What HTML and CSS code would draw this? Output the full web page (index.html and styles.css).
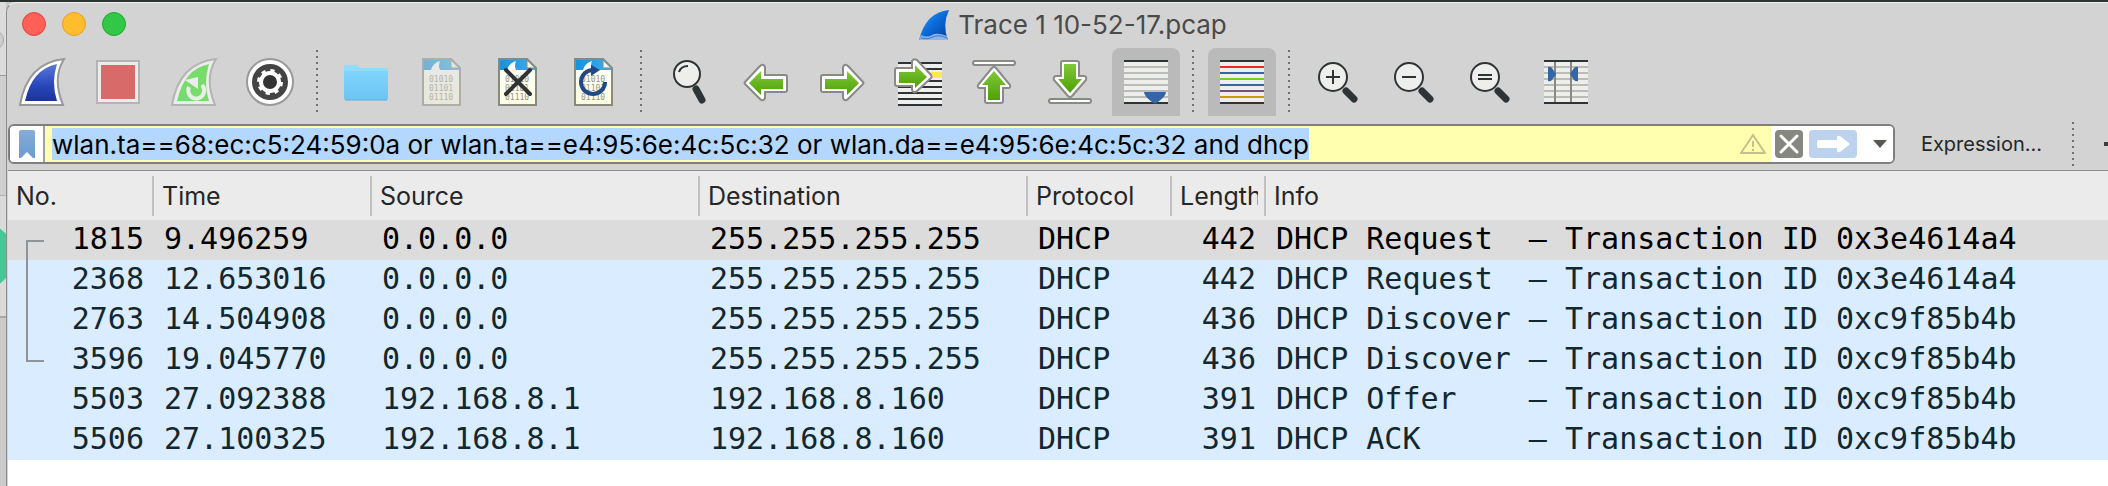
FILE: index.html
```html
<!DOCTYPE html>
<html lang="en">
<head>
<meta charset="utf-8">
<title>Trace 1 10-52-17.pcap</title>
<link rel="stylesheet" href="styles.css">
</head>
<body>
<svg class="defs" width="0" height="0" aria-hidden="true">
<defs>
<linearGradient id="blue" x1="0" y1="0" x2="0" y2="1"><stop offset="0" stop-color="#5a78dc"/><stop offset=".6" stop-color="#2846b8"/><stop offset="1" stop-color="#1c3496"/></linearGradient>
<linearGradient id="logo" x1="0" y1="0" x2="1" y2="1"><stop offset="0" stop-color="#2f9cff"/><stop offset=".5" stop-color="#0a6ad8"/><stop offset="1" stop-color="#063a90"/></linearGradient>
<linearGradient id="green" x1="0" y1="0" x2="0" y2="1"><stop offset="0" stop-color="#80c838"/><stop offset="1" stop-color="#4ea008"/></linearGradient>
<linearGradient id="folder" x1="0" y1="0" x2="0" y2="1"><stop offset="0" stop-color="#7fd4fb"/><stop offset="1" stop-color="#6cc5f3"/></linearGradient>
<linearGradient id="paper" x1="0" y1="0" x2="0" y2="1"><stop offset="0" stop-color="#ffffff"/><stop offset="1" stop-color="#fdfde0"/></linearGradient>
<linearGradient id="sky" x1="0" y1="0" x2="1" y2="0"><stop offset="0" stop-color="#1a90d8"/><stop offset="1" stop-color="#3cb0ea"/></linearGradient>
<linearGradient id="mark" x1="0" y1="0" x2="0" y2="1"><stop offset="0" stop-color="#86acd8"/><stop offset="1" stop-color="#6a9bd0"/></linearGradient>
<path id="arrow" d="M2 24 L17 8 Q20 5 22 9 V17 H42 Q44 17 44 19 V32 Q44 34 42 34 H22 V40 Q20 44 17 41 L2 26 Q1 25 2 24Z"/>
<g id="page">
<path d="M5 1 H33 L42 10 V47 H5Z" fill="url(#paper)"/>
<path d="M5 1 H33 L42 10 V12 H5Z" fill="url(#sky)"/>
<path d="M13 12 Q15 5 22 3 Q20 8 22 12Z" fill="#fff"/>
<path d="M33 2 V10 H42Z" fill="#f4f4ec" stroke="#888a80" stroke-width="1"/>
<g fill="#94948c" font-family="DejaVu Sans Mono, monospace" font-size="8"><text x="11" y="24">01010</text><text x="11" y="33">01101</text><text x="11" y="42">01110</text></g>
<path d="M5 1 H33 L42 10 V47 H5Z" fill="none" stroke="#888a80" stroke-width="2"/>
</g>
<g id="lens"><path d="M30 31 L38 39" stroke="#2e3436" stroke-width="7" stroke-linecap="round"/><circle cx="17" cy="17" r="14" fill="#eeeeec" stroke="#2e3436" stroke-width="2"/></g>
</defs>
</svg>
<div class="desktop">
<div class="behind" aria-hidden="true"><i class="knob"></i><i class="badge"></i></div>
<main class="window">
<header class="titlebar">
<div class="lights"><button class="light red" aria-label="Close"></button><button class="light amber" aria-label="Minimize"></button><button class="light lime" aria-label="Zoom"></button></div>
<h1 class="title"><svg width="32" height="32" viewBox="0 0 32 32" aria-hidden="true"><path d="M1 31 Q8 3 31 1 Q24 16 30 31Z" fill="url(#logo)"/><path d="M1 31 L3 26 Q9 29 14 26 T29 27 L30 31Z" fill="#8cb4e8"/><path d="M3 29 Q10 31 15 28 T29 29" fill="none" stroke="#3c78cc"/></svg>Trace 1 10-52-17.pcap</h1>
</header>
<nav class="toolbar" aria-label="Main toolbar">
<button class="tool" aria-label="Start capture"><svg viewBox="0 0 48 48"><path d="M2 47 Q9 5 46 1 Q34 20 45 47Z" fill="#fff" stroke="#999" stroke-width="2"/><path d="M7 43 Q14 11 39 6 Q33 24 39 43Z" fill="url(#blue)"/></svg></button>
<button class="tool" aria-label="Stop capture"><svg viewBox="0 0 48 48"><path d="M3 3 H45 V45 H3Z" fill="#ececec" stroke="#b4b4b4" stroke-width="2"/><path d="M7 7 H41 V41 H7Z" fill="#d86a6a"/></svg></button>
<button class="tool" aria-label="Restart capture"><svg viewBox="0 0 48 48"><path d="M2 47 Q9 5 46 1 Q34 20 45 47Z" fill="#ececec" stroke="#b4b4b4" stroke-width="2"/><path d="M7 43 Q14 11 39 6 Q33 24 39 43Z" fill="#78dc6c"/><path d="M19 29 A8 8 0 1 0 32 27" fill="none" stroke="#ececec" stroke-width="4"/><path d="M15 22 L28 19 V31Z" fill="#ececec"/></svg></button>
<button class="tool" aria-label="Capture options"><svg viewBox="0 0 48 48"><circle cx="24" cy="24" r="23" fill="#fff" stroke="#999" stroke-width="2"/><circle cx="24" cy="24" r="18" fill="#444"/><circle cx="24" cy="24" r="9" fill="#333" stroke="#fff" stroke-width="4"/><circle cx="24" cy="24" r="11" fill="none" stroke="#fff" stroke-width="4" stroke-dasharray="4 4.64"/></svg></button>
<i class="dots"></i>
<button class="tool" aria-label="Open"><svg viewBox="0 0 48 48"><path d="M2 40 V9 Q2 7 4 7 H15 L19 10 H44 Q46 10 46 12 V40Z" fill="#90dcff"/><path d="M2 13 H46 V40 Q46 42 44 42 H4 Q2 42 2 40Z" fill="url(#folder)"/><path d="M3 42 H45" stroke="#5aaede" stroke-width="1"/></svg></button>
<button class="tool" aria-label="Save" disabled><svg class="faded" viewBox="0 0 48 48"><use href="#page"/></svg></button>
<button class="tool" aria-label="Close file"><svg viewBox="0 0 48 48"><use href="#page"/><path d="M12 12 L36 36 M36 12 L12 36" stroke="#2e3436" stroke-width="4" stroke-linecap="round"/></svg></button>
<button class="tool" aria-label="Reload"><svg viewBox="0 0 48 48"><use href="#page"/><path d="M23 12 A12 12 0 1 0 35 24" fill="none" stroke="#204a87" stroke-width="4"/><path d="M21 7 L30 12 L21 18Z" fill="#204a87"/></svg></button>
<i class="dots"></i>
<button class="tool" aria-label="Find"><svg viewBox="0 0 48 48"><path d="M30 31 L36 42" stroke="#2e3436" stroke-width="7" stroke-linecap="round"/><circle cx="21" cy="16" r="13" fill="#eeeeec" stroke="#2e3436" stroke-width="2"/><path d="M13 14 Q15 8 22 8" fill="none" stroke="#2e3436" stroke-width="2"/></svg></button>
<button class="tool" aria-label="Previous packet"><svg viewBox="0 0 48 48"><g transform="translate(1 0)"><use href="#arrow" fill="#fff" stroke="#888a85" stroke-width="2"/><path d="M6 25 L18 13 V21 H40 V31 H18 V37Z" fill="url(#green)"/></g></svg></button>
<button class="tool" aria-label="Next packet"><svg viewBox="0 0 48 48"><g transform="matrix(-1 0 0 1 47 0)"><use href="#arrow" fill="#fff" stroke="#888a85" stroke-width="2"/><path d="M6 25 L18 13 V21 H40 V31 H18 V37Z" fill="url(#green)"/></g></svg></button>
<button class="tool" aria-label="Go to packet"><svg viewBox="0 0 48 48"><path d="M4 4 H48 V48 H4Z" fill="#eeeeec"/><path d="M30 14 H48 V20 H30Z" fill="#fce94f"/><path d="M4 5 H48 M4 11 H48 M4 23 H48 M4 29 H48 M4 35 H48 M4 41 H48 M4 47 H48" stroke="#2e3436" stroke-width="2"/><g transform="matrix(-1 0 0 1 45 -6)"><path d="M8 23 L22 8 Q25 6 27 9 V16 H42 Q44 16 44 18 V32 Q44 34 42 34 H27 V38 Q25 42 22 39 L8 26 Q7 25 8 23Z" fill="#fff" stroke="#888a85" stroke-width="2"/><path d="M12 25 L24 13 V20 H40 V31 H24 V36Z" fill="url(#green)"/></g></svg></button>
<button class="tool" aria-label="First packet"><svg viewBox="0 0 48 48"><rect x="3" y="3" width="42" height="4" rx="2" fill="#fff" stroke="#888a85" stroke-width="2"/><path d="M22 10 Q24 8 26 10 L40 27 Q41 30 38 30 H33 V43 Q33 45 31 45 H17 Q15 45 15 43 V30 H10 Q7 30 8 27Z" fill="#fff" stroke="#888a85" stroke-width="2"/><path d="M24 13 L36 27 H30 V42 H18 V27 H12Z" fill="url(#green)"/></svg></button>
<button class="tool" aria-label="Last packet"><svg viewBox="0 0 48 48"><rect x="3" y="41" width="42" height="4" rx="2" fill="#fff" stroke="#888a85" stroke-width="2"/><path d="M22 38 Q24 40 26 38 L40 22 Q41 18 38 18 H33 V5 Q33 3 31 3 H17 Q15 3 15 5 V18 H10 Q7 18 8 22Z" fill="#fff" stroke="#888a85" stroke-width="2"/><path d="M24 35 L36 21 H30 V6 H18 V21 H12Z" fill="url(#green)"/></svg></button>
<button class="tool pressed" aria-pressed="true" aria-label="Auto scroll"><svg viewBox="0 0 48 48"><path d="M2 2 H46 V46 H2Z" fill="#eeeeec"/><path d="M2 9 H46 M2 15 H46 M2 21 H46 M2 27 H46 M2 33 H46 M2 39 H46" stroke="#babdb6" stroke-width="2"/><path d="M2 3 H46 M2 45 H46" stroke="#2e3436" stroke-width="2"/><path d="M22 34 H44 Q44 38 36 44 Q33 47 30 44 Q22 38 22 34Z" fill="#3465a4"/></svg></button>
<i class="dots"></i>
<button class="tool pressed" aria-pressed="true" aria-label="Colorize"><svg viewBox="0 0 48 48"><path d="M2 2 H46 V46 H2Z" fill="#eeeeec"/><g stroke-width="2"><path d="M2 3 H46 M2 45 H46" stroke="#2e3436"/><path d="M2 9 H46" stroke="#ef2929"/><path d="M2 15 H46 M2 27 H46" stroke="#3465a4"/><path d="M2 21 H46" stroke="#73d216"/><path d="M2 33 H46" stroke="#75507b"/><path d="M2 39 H46" stroke="#c4a000"/></g></svg></button>
<i class="dots"></i>
<button class="tool" aria-label="Zoom in"><svg viewBox="0 0 48 48"><use href="#lens" x="2" y="2"/><path d="M12 19 H26 M19 12 V26" stroke="#2e3436" stroke-width="2"/></svg></button>
<button class="tool" aria-label="Zoom out"><svg viewBox="0 0 48 48"><use href="#lens" x="2" y="2"/><path d="M12 19 H26" stroke="#2e3436" stroke-width="2"/></svg></button>
<button class="tool" aria-label="Normal size"><svg viewBox="0 0 48 48"><use href="#lens" x="2" y="2"/><path d="M12 17 H26 M12 21 H26" stroke="#2e3436" stroke-width="2"/></svg></button>
<button class="tool" aria-label="Resize columns"><svg viewBox="0 0 48 48"><path d="M2 2 H46 V46 H2Z" fill="#eeeeec"/><path d="M2 9 H46 M2 15 H46 M2 21 H46 M2 27 H46 M2 33 H46 M2 39 H46" stroke="#babdb6" stroke-width="2"/><path d="M13 2 V46 M29 2 V46" stroke="#888a85" stroke-width="2"/><path d="M2 3 H46 M2 45 H46" stroke="#2e3436" stroke-width="2"/><path d="M6 9 Q8 8 10 10 L14 16 L10 22 Q8 24 6 23Z M36 9 Q34 8 32 10 L28 16 L32 22 Q34 24 36 23Z" fill="#3465a4"/></svg></button>
</nav>
<form class="filterbar">
<div class="filter">
<button type="button" class="bookmark" aria-label="Bookmarks"><svg width="16" height="28" viewBox="0 0 16 28"><path d="M0 2 Q0 0 2 0 H14 Q16 0 16 2 V28 H14 L8 22 L2 28 H0Z" fill="url(#mark)"/></svg></button>
<label class="entry" aria-label="Display filter"><input class="query" type="text" value="wlan.ta==68:ec:c5:24:59:0a or wlan.ta==e4:95:6e:4c:5c:32 or wlan.da==e4:95:6e:4c:5c:32 and dhcp"></label>
<svg class="warn" width="26" height="22" viewBox="0 0 26 22" aria-hidden="true"><path d="M13 2 L25 20 H1Z M13 8 V14 M13 16 V18" fill="none" stroke="#c4c28a" stroke-width="2"/></svg>
<div class="actions">
<button type="button" class="clear" aria-label="Clear"><svg width="28" height="28" viewBox="0 0 28 28"><path d="M6 6 L22 22 M22 6 L6 22" stroke="#fff" stroke-width="3" stroke-linecap="round"/></svg></button>
<button type="button" class="apply" aria-label="Apply"><svg width="48" height="28" viewBox="0 0 48 28"><path d="M10 10 H28 V7 Q29 5 31 6 L40 13 Q41 14 40 15 L31 22 Q29 23 28 21 V18 H10 Q8 18 8 16 V12 Q8 10 10 10Z" fill="#fff"/></svg></button>
<button type="button" class="recent" aria-label="Recent filters"><svg width="14" height="8" viewBox="0 0 14 8"><path d="M0 0 H14 L7 8Z" fill="#555753"/></svg></button>
</div>
</div>
<button type="button" class="expression">Expression…</button>
<i class="dots short"></i>
<button type="button" class="plus" aria-label="Add filter button"><svg width="22" height="22" viewBox="0 0 22 22"><path d="M0 11 H22 M11 0 V22" stroke="#3c3c3c" stroke-width="4"/></svg></button>
</form>
<section class="packets">
<table class="list">
<colgroup><col class="c-no"><col class="c-time"><col class="c-addr"><col class="c-addr"><col class="c-proto"><col class="c-len"><col></colgroup>
<thead><tr><th><span>No.</span></th><th><span>Time</span></th><th><span>Source</span></th><th><span>Destination</span></th><th><span>Protocol</span></th><th><span>Length</span></th><th><span>Info</span></th></tr></thead>
<tbody>
<tr class="current"><td>1815</td><td>9.496259</td><td>0.0.0.0</td><td>255.255.255.255</td><td>DHCP</td><td>442</td><td>DHCP Request  – Transaction ID 0x3e4614a4</td></tr>
<tr><td>2368</td><td>12.653016</td><td>0.0.0.0</td><td>255.255.255.255</td><td>DHCP</td><td>442</td><td>DHCP Request  – Transaction ID 0x3e4614a4</td></tr>
<tr><td>2763</td><td>14.504908</td><td>0.0.0.0</td><td>255.255.255.255</td><td>DHCP</td><td>436</td><td>DHCP Discover – Transaction ID 0xc9f85b4b</td></tr>
<tr><td>3596</td><td>19.045770</td><td>0.0.0.0</td><td>255.255.255.255</td><td>DHCP</td><td>436</td><td>DHCP Discover – Transaction ID 0xc9f85b4b</td></tr>
<tr><td>5503</td><td>27.092388</td><td>192.168.8.1</td><td>192.168.8.160</td><td>DHCP</td><td>391</td><td>DHCP Offer    – Transaction ID 0xc9f85b4b</td></tr>
<tr><td>5506</td><td>27.100325</td><td>192.168.8.1</td><td>192.168.8.160</td><td>DHCP</td><td>391</td><td>DHCP ACK      – Transaction ID 0xc9f85b4b</td></tr>
</tbody>
</table>
<i class="related"></i>
</section>
</main>
</div>
</body>
</html>
```
FILE: styles.css
```css
* { box-sizing: border-box; }
body { margin: 0; background: #c8c8c8; font-family: Inter, "Liberation Sans", sans-serif; color: #262626; overflow: hidden; }
button { border: 0; padding: 0; background: none; font: inherit; color: inherit; display: flex; align-items: center; justify-content: center; flex: none; }
.defs { position: absolute; }
.desktop { display: flex; min-height: 100vh; border-top: 2px solid #2c3432; }
.behind { position: relative; width: 6px; flex: none; overflow: hidden; background: linear-gradient(#dcdcdc 0 73px, #9a9a9a 73px 74px, #cfcfcf 74px 193px, #b0b0b0 193px 194px, #dadada 194px 314px, #a8a8a8 314px 316px, #cbcbcb 316px); }
.knob { position: absolute; right: 2px; top: 28px; width: 20px; height: 20px; border: 1px solid #a8a8a8; border-radius: 50%; background: #cecece; }
.badge { position: absolute; left: -54px; top: 220px; width: 68px; height: 68px; border-radius: 50%; background: #45c895; }
.window { flex: 1; min-width: 0; display: flex; flex-direction: column; background: #d3d3d3; border-left: 1px solid #8c8c8c; border-top: 1px solid #f0f0f0; border-top-left-radius: 10px; overflow: hidden; }
.titlebar { position: relative; display: flex; align-items: center; justify-content: center; height: 45px; padding: 0 0 2px 30px; }
.lights { position: absolute; left: 15px; top: 9px; display: flex; gap: 16px; }
.light { width: 24px; height: 24px; border-radius: 50%; border: 1px solid; }
.red { background: #ff6057; border-color: #e0443e; }
.amber { background: #ffbd2e; border-color: #dea123; }
.lime { background: #33c748; border-color: #1aab29; }
.title { margin: 0; display: flex; align-items: center; gap: 8px; font-size: 26px; font-weight: 400; color: #4a4a4a; white-space: nowrap; }
.toolbar { display: flex; gap: 8px; padding-left: 1px; height: 68px; }
.tool { width: 68px; height: 68px; }
.tool svg { width: 48px; height: 48px; }
.pressed { background: #bababa; border-radius: 8px 8px 0 0; }
.faded { opacity: .5; }
.dots { flex: none; width: 12px; height: 64px; margin-top: 2px; background: repeating-linear-gradient(#707070 0 2px, transparent 2px 6px) 4px 0 / 2px 100% no-repeat; }
.filterbar { display: flex; align-items: center; padding: 6px 0 4px 1px; margin-right: -18px; }
.filter { flex: 1; min-width: 0; display: flex; height: 40px; border: 2px solid #7f7f7f; border-radius: 6px; overflow: hidden; background: #ffffaf; }
.bookmark { width: 35px; background: #fff; border-right: 2px solid #a0a0a0; }
.entry { flex: 1; min-width: 0; display: flex; align-items: center; padding-left: 7px; }
.query { field-sizing: content; border: 0; padding: 0; height: 32px; background: #b3d7ff; font: 26px Inter, "Liberation Sans", sans-serif; color: #000; outline: 0; }
.warn { flex: none; align-self: center; margin-right: 5px; }
.actions { display: flex; align-items: center; gap: 6px; width: 122px; padding-left: 4px; background: #fff; }
.clear { width: 28px; height: 28px; border-radius: 4px; background: #858780; }
.apply { width: 48px; height: 28px; border-radius: 4px; background: #bdd2ec; }
.recent { width: 32px; height: 28px; padding-left: 2px; }
.expression { margin-left: 26px; font-size: 20px; }
.short { height: 44px; margin: 0 0 0 26px; }
.plus { margin-left: 24px; }
.packets { position: relative; flex: 1; margin-left: 1px; border-top: 1px solid #8f8f8f; background: #fff; }
.list { width: 100%; table-layout: fixed; border-collapse: collapse; }
.c-no { width: 146px; }
.c-time { width: 218px; }
.c-addr { width: 328px; }
.c-proto { width: 144px; }
.c-len { width: 94px; }
th { height: 49px; padding: 0; background: #ebebeb; text-align: left; font-size: 25px; font-weight: 400; }
th span { display: block; height: 40px; line-height: 40px; padding: 0 6px 0 8px; border-right: 2px solid #c0c0c0; overflow: clip; overflow-clip-margin: content-box; }
th:last-child span { border: 0; }
td { height: 40px; padding: 0 0 2px 10px; line-height: 38px; background: #daecff; color: #12272e; font-family: "DejaVu Sans Mono", monospace; font-size: 30px; white-space: pre; }
td:nth-child(1), td:nth-child(6) { padding: 0 10px 2px 0; text-align: right; }
.current td { background: #dcdcdc; color: #000; }
.related { position: absolute; left: 18px; top: 69px; width: 18px; height: 122px; border: 2px solid #8f9499; border-right: 0; }
```
